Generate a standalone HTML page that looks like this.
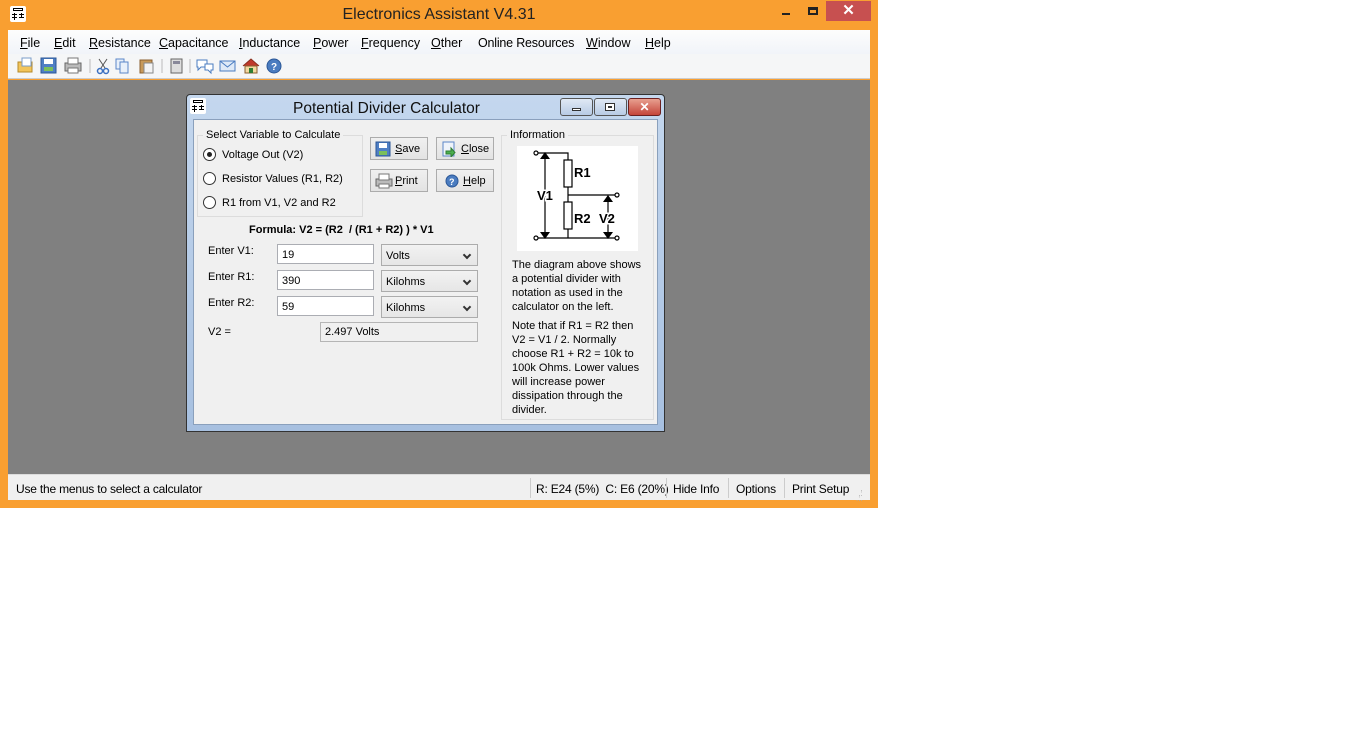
<!DOCTYPE html>
<html><head><style>
*{margin:0;padding:0;box-sizing:border-box}
body{width:1366px;height:742px;background:#fff;position:relative;overflow:hidden;font-family:"Liberation Sans",sans-serif;font-size:11px;color:#000}
.a{position:absolute}
.seg{font-family:"Liberation Sans",sans-serif;font-size:12.5px;white-space:nowrap}
.st{font-size:12px;letter-spacing:-0.2px}
u{text-decoration:underline}
.btn{position:absolute;width:58px;height:23px;border:1px solid #acacac;background:linear-gradient(#f0f0f0,#e3e3e3);font-size:11px;display:flex;align-items:center;padding-left:4px}
.btn span{margin-left:4px}
.inp{position:absolute;background:#fff;border:1px solid #abadb3;height:20px;padding:4px 0 0 4px;font-size:11px}
.sel{position:absolute;background:linear-gradient(#f2f2f2,#e6e6e6);border:1px solid #acacac;height:22px;width:97px;padding:5px 0 0 4px;font-size:11px}
.sel:after{content:"";position:absolute;right:7px;top:7px;width:4px;height:4px;border-right:2px solid #333;border-bottom:2px solid #333;transform:rotate(45deg)}
.rad{position:absolute;width:13px;height:13px;border-radius:50%;border:1px solid #333;background:#fff}
.lbl{position:absolute;font-size:11px}
</style></head><body>
<div class="a" style="left:0;top:0;width:878px;height:508px;background:#f99f31"></div>
<div class="a" style="left:10px;top:6px;width:16px;height:16px;background:#fff;border-radius:2px"></div>
<svg class="a" style="left:10px;top:6px" width="16" height="16"><g stroke="#000" stroke-width="1" fill="none"><rect x="3.5" y="2.5" width="9" height="2"/><line x1="2" y1="8.5" x2="7" y2="8.5"/><line x1="9" y1="8.5" x2="14" y2="8.5"/><line x1="2" y1="11.5" x2="7" y2="11.5"/><line x1="9" y1="11.5" x2="14" y2="11.5"/><line x1="4.5" y1="7" x2="4.5" y2="14"/><line x1="11.5" y1="7" x2="11.5" y2="11"/></g></svg>
<div class="a seg" style="left:0;width:878px;top:6px;text-align:center;font-size:16px;color:#222">Electronics Assistant V4.31</div>
<div class="a" style="left:782px;top:13px;width:8px;height:2px;background:#222"></div>
<div class="a" style="left:808px;top:7px;width:10px;height:8px;border:2px solid #222;border-top-width:3px"></div>
<div class="a" style="left:826px;top:1px;width:45px;height:20px;background:#c75050;color:#fff;text-align:center;font-size:15px;font-weight:bold;line-height:20px">✕</div>
<div class="a" style="left:8px;top:30px;width:862px;height:24px;background:linear-gradient(#fdfdfd,#f1f4f9)"></div>
<div class="a seg" style="left:20px;top:36px">
<span style="position:absolute;left:0"><u>F</u>ile</span>
<span style="position:absolute;left:34px"><u>E</u>dit</span>
<span style="position:absolute;left:69px"><u>R</u>esistance</span>
<span style="position:absolute;left:139px"><u>C</u>apacitance</span>
<span style="position:absolute;left:219px"><u>I</u>nductance</span>
<span style="position:absolute;left:293px"><u>P</u>ower</span>
<span style="position:absolute;left:341px"><u>F</u>requency</span>
<span style="position:absolute;left:411px"><u>O</u>ther</span>
<span style="position:absolute;left:458px;letter-spacing:-0.2px">Online Resources</span>
<span style="position:absolute;left:566px"><u>W</u>indow</span>
<span style="position:absolute;left:625px"><u>H</u>elp</span>
</div>
<div class="a" style="left:8px;top:54px;width:862px;height:25px;background:#f5f6f7;border-bottom:1px solid #ccc"></div>
<svg class="a" style="left:16px;top:57px" width="280" height="18">
<rect x="2" y="5" width="14" height="10" fill="#f2c45a" stroke="#b58a2a"/><rect x="6" y="1" width="9" height="8" fill="#fff" stroke="#7a9cc8"/>
<rect x="25" y="1" width="15" height="15" fill="#4f7fc4" stroke="#2b5797"/><rect x="28" y="2" width="9" height="5" fill="#fff"/><rect x="28" y="10" width="9" height="4" fill="#7bbf5b"/>
<rect x="49" y="6" width="16" height="8" fill="#bbb" stroke="#666"/><rect x="52" y="1" width="10" height="6" fill="#fff" stroke="#777"/><rect x="52" y="11" width="10" height="5" fill="#fff" stroke="#777"/>
<line x1="74" y1="2" x2="74" y2="16" stroke="#bbb"/>
<path d="M83 2 L89 11 M91 2 L85 11" stroke="#555" fill="none"/><circle cx="84" cy="14" r="2.5" fill="none" stroke="#3a6fc0" stroke-width="1.5"/><circle cx="90" cy="14" r="2.5" fill="none" stroke="#3a6fc0" stroke-width="1.5"/>
<rect x="100" y="2" width="8" height="10" fill="#e8f0fa" stroke="#5a86c8"/><rect x="104" y="5" width="8" height="11" fill="#e8f0fa" stroke="#5a86c8"/>
<rect x="124" y="3" width="12" height="13" fill="#c89a5a" stroke="#8a6030"/><rect x="128" y="6" width="9" height="10" fill="#f4f4f4" stroke="#888"/>
<line x1="146" y1="2" x2="146" y2="16" stroke="#bbb"/>
<rect x="155" y="2" width="11" height="14" fill="#ddd" stroke="#666"/><rect x="157" y="4" width="7" height="3" fill="#889"/>
<line x1="174" y1="2" x2="174" y2="16" stroke="#bbb"/>
<path d="M181 3 h10 v7 h-6 l-3 3 v-3 h-1 z" fill="#fff" stroke="#4a7cc0"/><path d="M189 7 h8 v6 h-2 v3 l-3 -3 h-3z" fill="#fff" stroke="#4a7cc0"/>
<rect x="204" y="4" width="15" height="10" fill="#dfeaf7" stroke="#4a7cc0"/><path d="M204 4 l7.5 6 l7.5 -6" fill="none" stroke="#4a7cc0"/>
<path d="M227 9 l8 -7 l8 7" fill="#c0392b" stroke="#8a3020"/><rect x="229" y="9" width="12" height="7" fill="#f3d9a0" stroke="#8a6030"/><rect x="233" y="11" width="4" height="5" fill="#2e7d32"/>
<circle cx="258" cy="9" r="7" fill="#4a7cc0" stroke="#2b5797"/><text x="255" y="13" font-size="10" fill="#fff" font-weight="bold" font-family="Liberation Sans">?</text>
</svg>
<div class="a" style="left:8px;top:80px;width:862px;height:394px;background:#808080"></div>
<div class="a" style="left:8px;top:474px;width:862px;height:26px;background:#f0f0f0;border-top:1px solid #dcdcdc"></div>
<div class="a seg st" style="left:16px;top:482px">Use the menus to select a calculator</div>
<div class="a" style="left:530px;top:478px;width:1px;height:20px;background:#ccc"></div>
<div class="a seg st" style="left:536px;top:482px">R: E24 (5%)&nbsp; C: E6 (20%)</div>
<div class="a" style="left:666px;top:478px;width:1px;height:20px;background:#ccc"></div>
<div class="a seg st" style="left:673px;top:482px">Hide Info</div>
<div class="a" style="left:728px;top:478px;width:1px;height:20px;background:#ccc"></div>
<div class="a seg st" style="left:736px;top:482px">Options</div>
<div class="a" style="left:784px;top:478px;width:1px;height:20px;background:#ccc"></div>
<div class="a seg st" style="left:792px;top:482px">Print Setup</div>
<div class="a" style="left:856px;top:486px;color:#aaa;font-size:8px;line-height:5px">&nbsp;&nbsp;.<br>&nbsp;.:<br>.:.</div>

<div class="a" style="left:186px;top:94px;width:479px;height:338px;background:linear-gradient(#c4d7ee,#a7c0e0);border:1px solid #333;border-radius:4px 4px 0 0"></div>
<div class="a" style="left:190px;top:98px;width:16px;height:16px;background:#fff;border-radius:2px"></div>
<svg class="a" style="left:190px;top:98px" width="16" height="16"><g stroke="#000" stroke-width="1" fill="none"><rect x="3.5" y="2.5" width="9" height="2"/><line x1="2" y1="8.5" x2="7" y2="8.5"/><line x1="9" y1="8.5" x2="14" y2="8.5"/><line x1="2" y1="11.5" x2="7" y2="11.5"/><line x1="9" y1="11.5" x2="14" y2="11.5"/><line x1="4.5" y1="7" x2="4.5" y2="14"/><line x1="11.5" y1="7" x2="11.5" y2="11"/></g></svg>
<div class="a seg" style="left:293px;top:100px;font-size:15.5px;color:#111">Potential Divider Calculator</div>
<div class="a" style="left:560px;top:98px;width:33px;height:18px;border:1px solid #555;border-radius:3px;background:linear-gradient(#e0e9f5,#b8cbe5)"><div class="a" style="left:11px;top:9px;width:9px;height:3px;border:1px solid #333;background:#fff"></div></div>
<div class="a" style="left:594px;top:98px;width:33px;height:18px;border:1px solid #555;border-radius:3px;background:linear-gradient(#e0e9f5,#b8cbe5)"><div class="a" style="left:10px;top:4px;width:10px;height:8px;border:1px solid #333;background:#fff"><div class="a" style="left:2px;top:2px;width:4px;height:2px;border:1px solid #333"></div></div></div>
<div class="a" style="left:628px;top:98px;width:33px;height:18px;border:1px solid #6b2020;border-radius:3px;background:linear-gradient(#e8a090,#c4453a);color:#fff;text-align:center;font-weight:bold;font-size:12px;line-height:16px">✕</div>
<div class="a" style="left:193px;top:119px;width:465px;height:306px;background:#f0f0f0;border:1px solid #8aa0bc"></div>

<div class="a" style="left:197px;top:135px;width:166px;height:82px;border:1px solid #dcdcdc"></div>
<div class="lbl" style="left:203px;top:129px;background:#f0f0f0;padding:0 3px">Select Variable to Calculate</div>
<div class="rad" style="left:203px;top:148px"><div class="a" style="left:3px;top:3px;width:5px;height:5px;border-radius:50%;background:#222"></div></div>
<div class="lbl" style="left:222px;top:149px">Voltage Out (V2)</div>
<div class="rad" style="left:203px;top:172px"></div>
<div class="lbl" style="left:222px;top:173px">Resistor Values (R1, R2)</div>
<div class="rad" style="left:203px;top:196px"></div>
<div class="lbl" style="left:222px;top:197px">R1 from V1, V2 and R2</div>

<div class="btn" style="left:370px;top:137px"><svg width="16" height="16"><rect x="1" y="1" width="14" height="14" fill="#4f7fc4" stroke="#2b5797"/><rect x="4" y="2" width="8" height="5" fill="#fff"/><rect x="4" y="10" width="8" height="4" fill="#7bbf5b"/></svg><span><u>S</u>ave</span></div>
<div class="btn" style="left:436px;top:137px"><svg width="16" height="16"><rect x="2" y="1" width="11" height="14" fill="#eef3fa" stroke="#5a86c8"/><path d="M5 10 h5 v-3 l4 4.5 l-4 4.5 v-3 h-5z" fill="#4caf50" stroke="#2e7d32"/></svg><span><u>C</u>lose</span></div>
<div class="btn" style="left:370px;top:169px"><svg width="18" height="16"><rect x="1" y="6" width="16" height="7" fill="#bbb" stroke="#666"/><rect x="4" y="1" width="10" height="6" fill="#fff" stroke="#777"/><rect x="4" y="11" width="10" height="4" fill="#fff" stroke="#777"/></svg><span style="margin-left:2px"><u>P</u>rint</span></div>
<div class="btn" style="left:436px;top:169px;padding-left:8px"><svg width="14" height="14"><circle cx="7" cy="7" r="6" fill="#4a7cc0" stroke="#2b5797"/><text x="4" y="11" font-size="9" fill="#fff" font-weight="bold" font-family="Liberation Sans">?</text></svg><span><u>H</u>elp</span></div>

<div class="lbl" style="left:249px;top:224px;font-weight:bold">Formula: V2 = (R2&nbsp; / (R1 + R2) ) * V1</div>

<div class="lbl" style="left:208px;top:245px">Enter V1:</div>
<div class="inp" style="left:277px;top:244px;width:97px">19</div>
<div class="sel" style="left:381px;top:244px">Volts</div>
<div class="lbl" style="left:208px;top:271px">Enter R1:</div>
<div class="inp" style="left:277px;top:270px;width:97px">390</div>
<div class="sel" style="left:381px;top:270px">Kilohms</div>
<div class="lbl" style="left:208px;top:297px">Enter R2:</div>
<div class="inp" style="left:277px;top:296px;width:97px">59</div>
<div class="sel" style="left:381px;top:296px">Kilohms</div>
<div class="lbl" style="left:208px;top:326px">V2 =</div>
<div class="inp" style="left:320px;top:322px;width:158px;background:#f0f0f0;border-color:#b5b5b5;padding-top:3px">2.497 Volts</div>

<div class="a" style="left:501px;top:135px;width:153px;height:285px;border:1px solid #dcdcdc"></div>
<div class="lbl" style="left:507px;top:129px;background:#f0f0f0;padding:0 3px">Information</div>
<svg class="a" style="left:517px;top:146px" width="121" height="105">
<rect width="121" height="105" fill="#fff"/>
<g stroke="#000" stroke-width="1.2" fill="none">
<circle cx="19" cy="7" r="2" fill="#fff"/><circle cx="19" cy="92" r="2" fill="#fff"/><circle cx="100" cy="49" r="2" fill="#fff"/><circle cx="100" cy="92" r="2" fill="#fff"/>
<path d="M21 7 H51 V14 M51 41 V56 M51 83 V92 M21 92 H98 M51 49 H98"/>
<rect x="47" y="14" width="8" height="27"/><rect x="47" y="56" width="8" height="27"/>
<path d="M28 12 V87 M91 54 V87"/>
</g>
<g fill="#000"><path d="M23 13 L28 6 L33 13z M23 86 L28 93 L33 86z M86 56 L91 49 L96 56z M86 86 L91 93 L96 86z"/></g>
<g font-family="Liberation Sans" font-weight="bold" font-size="13" fill="#000">
<text x="57" y="31">R1</text><text x="57" y="77">R2</text><text x="20" y="54" style="paint-order:stroke" stroke="#fff" stroke-width="3">V1</text><text x="82" y="77" stroke="#fff" stroke-width="3" style="paint-order:stroke">V2</text>
</g></svg>
<div class="lbl" style="left:512px;top:258px;line-height:14px;width:136px">The diagram above shows a potential divider with notation as used in the calculator on the left.</div>
<div class="lbl" style="left:512px;top:319px;line-height:14px;width:128px">Note that if R1 = R2 then V2 = V1 / 2. Normally choose R1 + R2 = 10k to 100k Ohms. Lower values will increase power dissipation through the divider.</div>
</body></html>
